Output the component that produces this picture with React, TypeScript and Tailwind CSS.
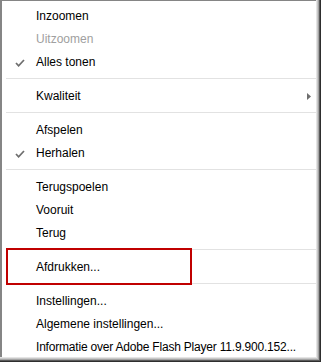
import React from "react";

type Item =
  | { kind: "item"; label: string; disabled?: boolean; checked?: boolean; submenu?: boolean; tight?: boolean }
  | { kind: "sep" };

const items: Item[] = [
  { kind: "item", label: "Inzoomen" },
  { kind: "item", label: "Uitzoomen", disabled: true },
  { kind: "item", label: "Alles tonen", checked: true },
  { kind: "sep" },
  { kind: "item", label: "Kwaliteit", submenu: true },
  { kind: "sep" },
  { kind: "item", label: "Afspelen" },
  { kind: "item", label: "Herhalen", checked: true },
  { kind: "sep" },
  { kind: "item", label: "Terugspoelen" },
  { kind: "item", label: "Vooruit" },
  { kind: "item", label: "Terug" },
  { kind: "sep" },
  { kind: "item", label: "Afdrukken..." },
  { kind: "sep" },
  { kind: "item", label: "Instellingen..." },
  { kind: "item", label: "Algemene instellingen..." },
  { kind: "item", label: "Informatie over Adobe Flash Player 11.9.900.152...", tight: true },
];

function Check() {
  return (
    <svg width="10" height="8" viewBox="0 0 10 8" className="absolute left-[13px] top-[8px]">
      <path d="M1 4 L3.6 6.8 L9 1" fill="none" stroke="#6e6e6e" strokeWidth="1.7" />
    </svg>
  );
}

function Arrow() {
  return (
    <svg width="4" height="7" viewBox="0 0 4 7" className="absolute right-[5px] top-[8px]">
      <path d="M0 0 L4 3.5 L0 7 Z" fill="#6e6e6e" />
    </svg>
  );
}

export default function App() {
  return (
    <div
      className="w-[321px] h-[362px] bg-white"
      style={{ fontFamily: '"Segoe UI", "Liberation Sans", Arial, sans-serif' }}
    >
      <div className="w-full h-full border-r border-b border-[#2e2e2e] flex">
        <div className="flex-1 border-r border-b border-[#5a5a5a] flex">
          <div className="flex-1 border-r border-b border-[#a4a4a4] flex">
            <div className="flex-1 border-r border-b border-[#c8c8c8] flex">
              <div className="flex-1 border-r border-b border-[#e4e4e4] flex">
                <div className="relative flex-1 border-l-2 border-t border-[#858585] bg-white pt-[4px] text-[12px] leading-[23px]">
                  {items.map((it, i) =>
                    it.kind === "sep" ? (
                      <div key={i} className="h-[11px] pt-[4px] pl-[4px]">
                        <div className="h-px bg-[#e2e2e2]" />
                      </div>
                    ) : (
                      <div
                        key={i}
                        className={`relative h-[23px] pl-[34px] whitespace-nowrap ${
                          it.disabled ? "text-[#a0a0a0]" : "text-black"
                        } ${it.tight ? "tracking-[-0.2px]" : ""}`}
                      >
                        {it.checked && <Check />}
                        {it.label}
                        {it.submenu && <Arrow />}
                      </div>
                    )
                  )}
                  <div className="absolute left-[4px] top-[247px] w-[186px] h-[37px] border-2 border-[#c00000]" />
                </div>
              </div>
            </div>
          </div>
        </div>
      </div>
    </div>
  );
}
